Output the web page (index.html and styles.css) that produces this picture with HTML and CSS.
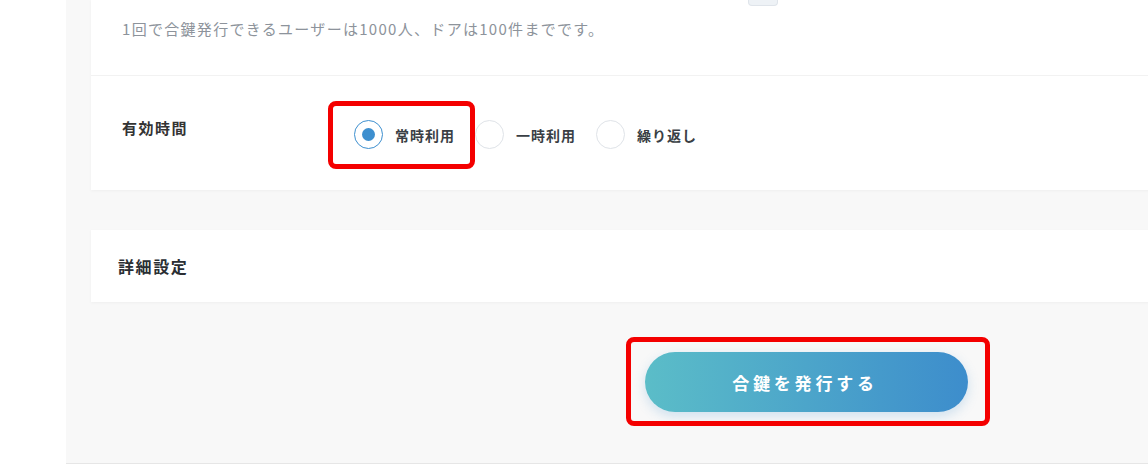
FILE: index.html
```html
<!DOCTYPE html>
<html lang="ja">
<head>
  <meta charset="UTF-8" />
  <meta name="viewport" content="width=device-width, initial-scale=1.0" />
  <title>合鍵発行</title>
  <link rel="stylesheet" href="styles.css">
</head>
<body>
  <div class="layout">
    <aside class="sidebar"></aside>
    <main class="main">
      <div class="content">
        <section class="card">
          <div class="row row-note">
            <span class="chip"></span>
            <p class="note">1回で合鍵発行できるユーザーは1000人、ドアは100件までです。</p>
          </div>
          <div class="row row-field">
            <div class="field-label">有効時間</div>
            <div class="radios">
              <label class="radio checked marked"><span class="circle"></span>常時利用</label>
              <label class="radio"><span class="circle"></span>一時利用</label>
              <label class="radio"><span class="circle"></span>繰り返し</label>
            </div>
          </div>
        </section>

        <section class="card card-detail">
          <h3>詳細設定</h3>
        </section>

        <div class="actions">
          <button type="button" class="btn-primary marked">合鍵を発行する</button>
        </div>
      </div>
    </main>
  </div>
</body>
</html>
```

FILE: styles.css
```css
* { box-sizing: border-box; }
body { margin: 0; background: #fff; font-family: "Noto Sans CJK JP", "Noto Sans", sans-serif; color: #333; }
.layout { display: flex; height: 464px; }
.sidebar { width: 66px; flex-shrink: 0; background: #fff; }
.main { flex: 1; background: #f8f8f8; border-bottom: 1px solid #e6e6e6; overflow: hidden; }
.content { width: 1430px; margin-left: 25px; }

.card { background: #fff; box-shadow: 0 1px 3px rgba(0,0,0,0.04); }
.row-note { height: 76px; border-bottom: 1px solid #f2f2f2; padding-left: 31px; }
.chip { display: block; width: 30px; height: 6px; margin-left: 626px; background: #eef2f6; border: 1px solid #dfe4ea; border-top: none; border-radius: 0 0 4px 4px; }
.note { margin: 13px 0 0; font-size: 15px; line-height: 20px; letter-spacing: 1.3px; color: #8d939b; }

.row-field { display: flex; align-items: flex-start; height: 114px; padding-left: 31px; }
.field-label { width: 232px; margin-top: 42px; font-size: 15px; font-weight: 700; line-height: 20px; letter-spacing: 1.5px; }
.radios { display: flex; gap: 20px; margin-top: 44px; }
.radio { position: relative; display: flex; align-items: center; gap: 12px; font-size: 14px; font-weight: 700; letter-spacing: 1px; color: #3a3f45; }
.circle { position: relative; width: 29px; height: 29px; border: 1.5px solid #dfe3e8; border-radius: 50%; background: #fff; }
.radio.checked .circle { border-color: #3d8fcf; }
.radio.checked .circle::after { content: ""; position: absolute; left: 6.5px; top: 6.5px; width: 13px; height: 13px; border-radius: 50%; background: #3d8fcf; }

.card-detail { margin-top: 40px; height: 72px; padding-left: 27px; }
.card-detail h3 { margin: 0; font-size: 16px; font-weight: 700; line-height: 72px; letter-spacing: 0.1em; color: #2a2e33; }

.actions { padding: 50px 0 51px; text-align: center; }
.btn-primary { position: relative; width: 323px; height: 60px; border: none; border-radius: 30px; background: linear-gradient(90deg, #5bbdc8, #3d8dcc); box-shadow: 0 4px 12px rgba(61,141,204,0.22); color: #fff; font-family: inherit; font-size: 17px; font-weight: 700; letter-spacing: 3.8px; padding-left: 4px; }

/* annotation boxes */
.marked::after { content: ""; position: absolute; border: 5px solid #f40000; border-radius: 8px; pointer-events: none; }
.radio.marked::after { left: -26px; right: -20px; top: -19px; bottom: -20px; }
.btn-primary.marked::after { left: -19px; right: -22px; top: -15px; bottom: -14px; }
```
